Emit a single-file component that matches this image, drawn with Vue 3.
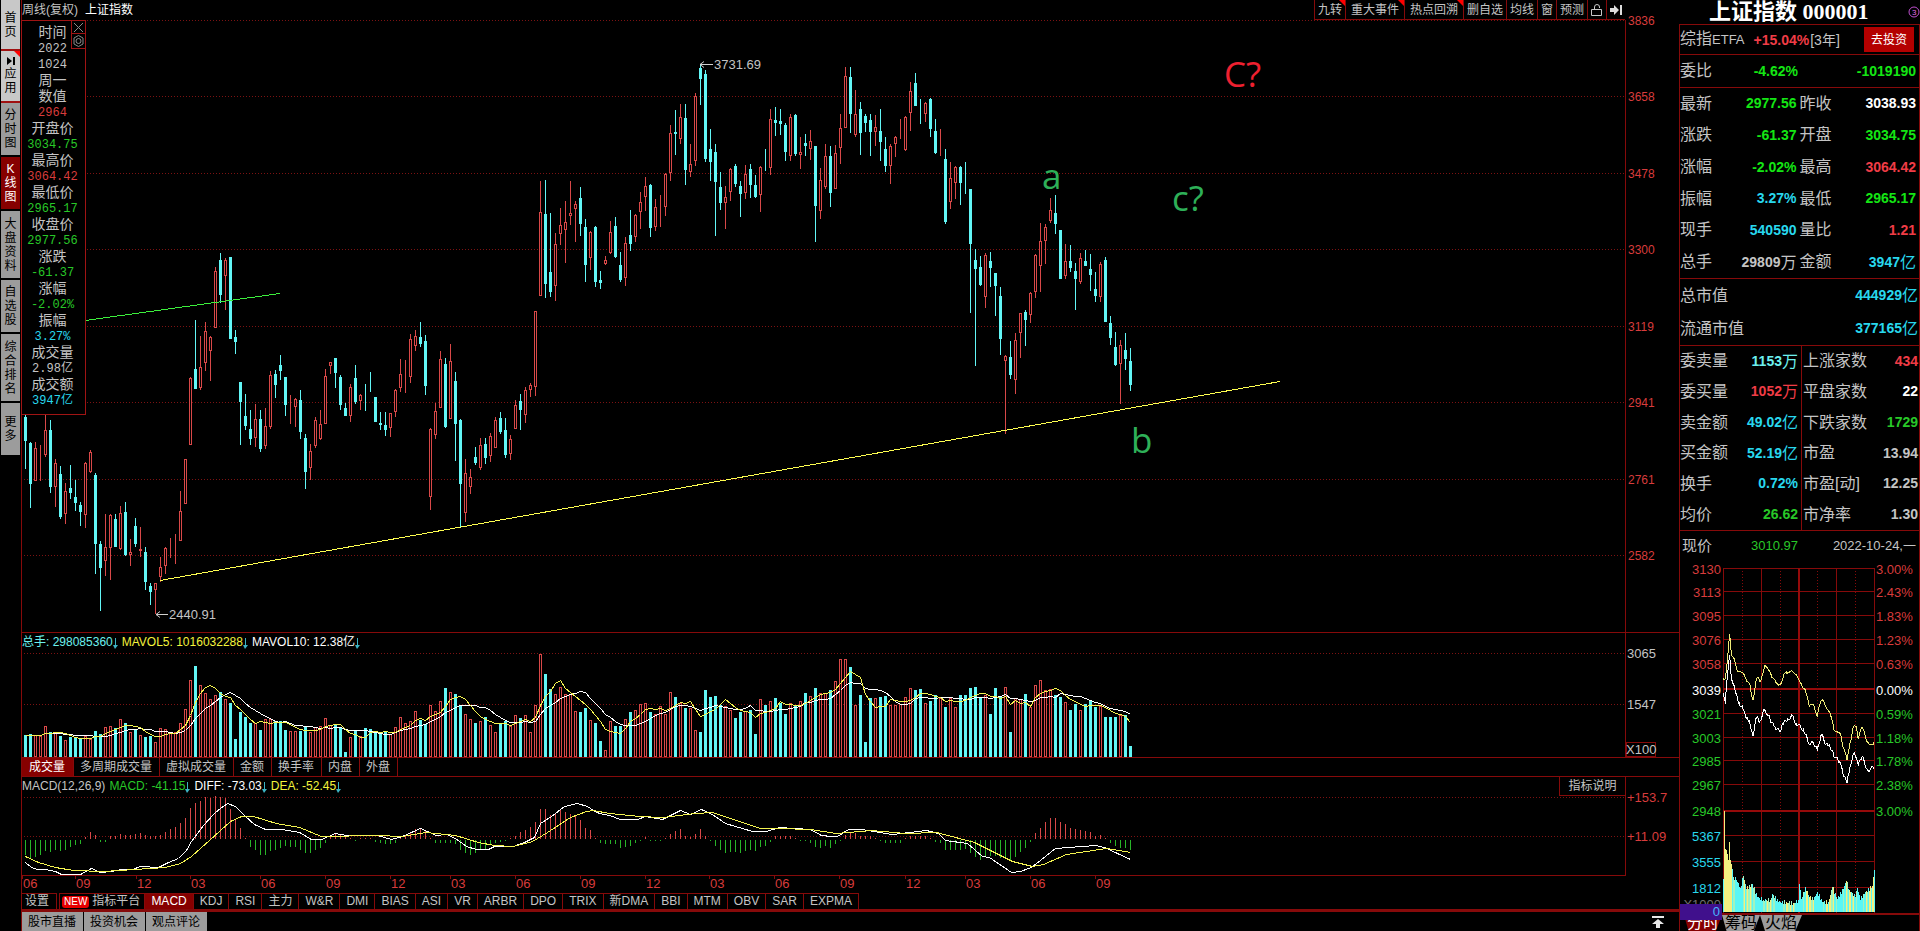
<script setup>
const sideTabs = [
  { text: '首页', h: 51, tone: 'light' },
  { text: '应用', h: 52, tone: 'light', play: true, flag: true },
  { text: '分时图', h: 54 },
  { text: 'K线图', h: 54, tone: 'on' },
  { text: '大盘资料', h: 69 },
  { text: '自选股', h: 54 },
  { text: '综合排名', h: 69 },
  { text: '更多', h: 54 },
]
const tools = [
  { text: '九转', flag: true },
  { text: '重大事件', flag: true, wide: true },
  { text: '热点回溯', flag: true, wide: true },
  { text: '删自选' },
  { text: '均线' },
  { text: '窗' },
  { text: '预测' },
]
const info = [
  ['时间'], ['2022', 'num'], ['1024', 'num'], ['周一'], ['数值'], ['2964', 'num r'],
  ['开盘价'], ['3034.75', 'num g'], ['最高价'], ['3064.42', 'num r'], ['最低价'], ['2965.17', 'num g'],
  ['收盘价'], ['2977.56', 'num g'], ['涨跌'], ['-61.37', 'num g'], ['涨幅'], ['-2.02%', 'num g'],
  ['振幅'], ['3.27%', 'num c'], ['成交量'], ['2.98亿', 'num'], ['成交额'], ['3947亿', 'num c'],
]

// One candle per entry: colour (r = up, c = down), high, body top, body bottom, low
const candleText = `
c414,417,441,469 c442,443,484,508 r442,448,481,481 r445,449,449,481 r415,430,455,457 c420,430,487,493
r459,463,487,507 c466,474,517,519 r483,491,514,524 c465,488,493,499 c480,497,503,511 c502,505,512,526
r462,463,515,528 r450,452,472,473 c473,475,544,574 c541,544,568,611 r514,547,561,576 r514,515,548,580
c514,519,547,547 r506,513,549,550 c502,512,555,556 r539,552,555,566 c518,526,544,547 r527,549,551,557
c547,552,582,590 c583,586,592,605 r583,583,590,614 r557,567,577,582 r547,548,566,574 r538,546,547,558
r534,539,540,564 r491,511,541,541 r459,459,504,504 r377,378,445,445 c320,369,389,389 r336,367,388,390
r322,331,363,371 r336,337,351,381 r267,271,328,328 c253,260,295,303 r258,260,276,310 c257,257,339,339
c330,337,342,354 c382,382,402,445 c394,416,426,430 c410,429,439,445 r404,419,438,447 c410,419,449,452
r408,426,446,449 r371,375,427,429 c370,374,385,398 c355,365,371,380 c377,377,405,416 r395,408,408,424
r398,399,407,427 c390,400,432,439 c434,438,472,489 r444,451,468,480 r417,420,446,448 r410,424,439,440
r369,376,424,424 r362,362,366,374 c358,358,373,388 c375,377,405,410 c403,408,416,416 r384,387,416,422
c365,378,402,404 r394,395,401,410 c384,393,394,411 c372,391,392,392 c397,397,422,422 c412,423,425,430
c412,425,430,436 r413,413,428,437 r389,390,412,417 r359,374,388,392 r360,374,375,393 r334,339,377,383
r330,336,346,351 c322,337,344,347 c335,341,386,395 r428,429,497,510 r403,411,435,439 r351,359,408,408
c358,364,427,428 r344,361,419,419 c372,381,424,461 c419,420,484,527 r459,473,513,522 r469,477,487,494
c447,457,463,465 r438,445,468,470 c438,444,458,464 r433,436,456,462 r417,420,448,448 c412,418,432,434
c418,430,455,458 r435,439,454,460 r400,405,429,429 c394,401,410,430 r387,390,415,423 r383,385,390,397
r311,311,387,396 r181,212,296,296 c180,214,284,298 c213,272,292,297 r233,244,286,301 r208,225,234,245
r201,222,230,263 r181,213,216,225 r201,204,209,242 c187,198,224,236 c219,227,265,282 r231,232,258,270
c226,227,282,287 c271,280,283,289 r256,260,264,265 r221,232,253,254 c217,226,257,258 c252,265,280,282
r237,243,278,286 c210,235,244,251 r214,215,237,242 r192,202,212,229 r177,186,197,211 c184,185,228,237
r199,207,227,231 r195,207,208,227 r173,174,207,216 r125,133,173,181 c110,132,134,155 r104,117,139,144
c104,118,170,185 r144,164,172,177 r93,96,161,166 c65,68,79,105 c70,74,159,162 c129,149,162,181
c144,152,182,236 c172,187,203,210 r186,197,203,229 r168,169,192,201 c164,166,184,187 c181,186,194,217
r165,174,193,199 c164,169,185,198 c175,185,197,198 r166,167,195,212 c149,167,168,171 r109,119,168,175
c107,120,123,136 c109,121,124,135 c123,125,152,161 r114,117,156,161 c114,115,154,156 r137,152,155,169
c134,143,146,156 r130,141,149,160 c146,146,206,242 r168,180,211,219 r144,156,187,189 c146,156,193,207
r145,153,189,189 r114,128,148,164 r67,76,128,128 c67,77,114,133 r90,114,135,137 c102,109,133,155
c114,116,123,132 c114,120,132,156 r115,127,132,146 c109,131,142,161 c137,149,166,172 r144,146,166,184
r136,137,144,157 r119,135,136,139 r116,117,150,151 r82,91,113,131 c73,83,106,106 c99,111,112,124
r102,103,114,122 c98,99,129,137 c119,131,153,154 r129,153,154,156 c149,159,222,224 r162,178,202,209
r166,167,183,199 c166,167,183,205 c162,184,185,194 c189,189,244,313 c249,260,269,366 c256,267,285,286
r253,255,297,308 c252,261,268,287 c273,273,286,316 c287,296,339,355 r355,356,361,434 c341,357,375,379
r333,340,380,394 r313,313,333,358 c310,312,320,346 r292,293,315,323 r254,255,292,298 r223,241,266,292
r224,227,241,264 r198,210,221,223 c195,213,224,234 c230,230,279,279 r244,261,276,279 c245,261,268,272
c263,271,279,310 r253,258,282,284 c250,261,266,266 c254,269,275,291 c272,289,296,302 r262,264,297,302
c257,260,322,322 c316,323,338,345 c332,347,365,366 r340,345,364,404 c333,350,359,370 c348,361,385,391`
const STEP = 5
const FIRST = 3.5
const cx = (i) => FIRST + STEP * i
const candles = candleText.trim().split(/\s+/).map((t, i) => {
  const [high, top, bottom, low] = t.slice(1).split(',').map(Number)
  return { up: t[0] === 'r', high, top, bottom, low, x: cx(i) }
})
const priceGrid = [[20, 3836], [96, 3658], [173, 3478], [249, 3300], [326, 3119], [402, 2941], [479, 2761], [555, 2582]]

const volumes = [
  25, 26, 25, 24, 36, 29, 28, 24, 20, 23, 22, 21, 24, 21, 30, 26, 34, 36, 33, 44, 39, 29, 32, 25, 23, 24, 17, 33, 32, 29,
  29, 39, 55, 88, 104, 82, 73, 67, 71, 74, 67, 62, 21, 51, 46, 39, 39, 31, 44, 44, 41, 41, 31, 30, 30, 30, 34, 29, 34, 36,
  45, 37, 38, 33, 6, 23, 30, 24, 33, 32, 29, 27, 29, 26, 34, 46, 39, 41, 53, 42, 38, 60, 53, 64, 79, 75, 72, 59, 49, 44,
  39, 41, 46, 37, 29, 39, 41, 36, 48, 45, 48, 29, 60, 118, 95, 78, 72, 80, 72, 72, 53, 52, 56, 42, 39, 18, 8, 41, 36, 36,
  44, 52, 54, 61, 62, 51, 49, 58, 49, 75, 69, 62, 56, 56, 31, 29, 77, 69, 70, 60, 58, 54, 45, 52, 53, 54, 26, 66, 59, 64,
  68, 62, 49, 62, 59, 64, 73, 70, 79, 73, 73, 77, 87, 112, 112, 103, 60, 71, 17, 68, 68, 69, 70, 59, 59, 61, 69, 79, 77, 78,
  62, 64, 71, 68, 57, 68, 57, 71, 71, 79, 80, 68, 71, 49, 79, 69, 80, 29, 68, 66, 72, 57, 83, 88, 77, 78, 71, 69, 63, 54,
  61, 54, 61, 65, 57, 58, 46, 46, 46, 48, 48, 13,
]
const VOL_BASE = 124
const volY = (v) => VOL_BASE - Math.round((v * 103) / 118)
const volBars = volumes.map((v, i) => ({ x: cx(i), y: volY(v), up: candles[i].up }))
const average = (n) =>
  volumes
    .map((_, i) => {
      const part = volumes.slice(Math.max(0, i - n + 1), i + 1)
      return `${cx(i)},${volY(part.reduce((a, b) => a + b, 0) / part.length) + 0.5}`
    })
    .join(' ')
const ma5 = average(5)
const ma10 = average(10)

const hist = [
  -17, -21, -20, -17, -13, -14, -11, -13, -11, -8, -6, -5, 2, 8, 5, -2, -2, 3, 3, 6, 5, 5, 6, 7, 5, 3, 3, 5, 8, 12,
  14, 18, 24, 36, 41, 44, 48, 47, 49, 48, 47, 34, 23, 13, 1, -8, -11, -17, -17, -13, -11, -9, -7, -8, -8, -11, -15, -15, -11, -9,
  -4, 5, 7, 5, 2, 1, -1, 1, 1, 1, -2, -4, -5, -5, -3, 1, 4, 8, 11, 13, 9, 1, -3, -3, -4, -3, -5, -12, -15, -17,
  -15, -11, -10, -6, -4, -2, -1, 1, 3, 8, 10, 14, 20, 34, 34, 28, 30, 34, 31, 29, 27, 22, 13, 10, 1, -4, -5, -5, -5, -9,
  -8, -7, -4, -1, 2, -1, -1, -1, 1, 6, 9, 11, 4, 2, 6, 11, 3, -1, -7, -12, -15, -14, -14, -15, -13, -12, -13, -8, -7, -2,
  3, 3, 3, 3, 1, -1, -1, -3, -8, -9, -7, -9, -5, -1, 5, 8, 7, 4, 3, 3, 1, -1, -4, -4, -4, -3, 1, 3, 4, 3,
  4, 1, -2, -4, -12, -12, -12, -11, -10, -15, -20, -23, -20, -18, -18, -21, -22, -24, -20, -14, -9, -2, 7, 13, 19, 24, 24, 19, 17, 13,
  12, 10, 9, 8, 4, 5, 1, -3, -7, -9, -9, -11,
]
const ZERO = 62
const macdLine = (points) =>
  points.trim().split(/\s+/).map((p) => {
    const [x, y] = p.split(',').map(Number)
    return `${x - 21.5},${Math.round(ZERO + (y - 870) * 0.87) + 0.5}`
  }).join(' ')
const diff = macdLine(`25,897 31,902 37,905 45,905 55,907 61,910 80,910 91,903 100,908 111,907 121,904 132,904 140,901 158,902 168,896 178,892
186,883 191,872 203,854 214,840 220,834 227,829 235,832 245,843 254,853 265,859 281,858 299,862 311,870 321,870 335,863 346,865 377,865
391,870 402,867 420,857 436,865 446,864 455,869 466,878 476,882 488,881 494,878 513,878 524,874 534,868 540,852 551,844 564,832 577,829
587,832 593,837 599,840 609,842 620,847 637,847 645,844 662,847 680,837 690,841 701,835 712,841 725,852 752,861 766,861 779,856
810,858 821,865 831,867 837,867 848,859 861,858 892,864 909,862 926,860 938,863 945,871 967,875 982,890 989,891 1011,908 1020,907
1031,902 1055,880 1095,877 1104,879 1130,893`)
const dea = macdLine(`25,889 38,897 55,902 73,906 103,907 134,904 165,902 180,898 191,890 209,871 230,849 241,843 253,844 276,852 299,856
321,866 377,865 402,867 425,862 455,865 478,873 494,877 513,878 532,872 547,862 570,845 586,838 593,837 609,840 639,844 662,845 695,840
712,839 733,847 760,857 779,857 810,858 836,863 871,860 905,863 936,862 974,873 1012,895 1032,901 1043,899 1066,887 1106,880 1130,885`)
const months = [
  [1, '06'], [54, '09'], [115, '12'], [169, '03'], [239, '06'], [304, '09'], [369, '12'], [429, '03'], [494, '06'],
  [559, '09'], [624, '12'], [688, '03'], [753, '06'], [818, '09'], [884, '12'], [944, '03'], [1009, '06'], [1074, '09'],
]
const volTabs = ['成交量', '多周期成交量', '虚拟成交量', '金额', '换手率', '内盘', '外盘']
const indTabs = ['MACD', 'KDJ', 'RSI', '主力', 'W&R', 'DMI', 'BIAS', 'ASI', 'VR', 'ARBR', 'DPO', 'TRIX', '新DMA', 'BBI', 'MTM', 'OBV', 'SAR', 'EXPMA']
const newsTabs = ['股市直播', '投资机会', '观点评论']

const quoteRows = [
  ['最新', '2977.56', '', 'G', '昨收', '3038.93', '', 'w'],
  ['涨跌', '-61.37', '', 'G', '开盘', '3034.75', '', 'G'],
  ['涨幅', '-2.02%', '', 'G', '最高', '3064.42', '', 'R'],
  ['振幅', '3.27%', '', 'c', '最低', '2965.17', '', 'G'],
  ['现手', '540590', '', 'c', '量比', '1.21', '', 'R'],
  ['总手', '29809', '万', '', '金额', '3947', '亿', 'c'],
]
const statRows = [
  ['委卖量', '1153', '万', 't', '上涨家数', '434', '', 'R'],
  ['委买量', '1052', '万', 'R', '平盘家数', '22', '', 'w'],
  ['卖金额', '49.02', '亿', 'c', '下跌家数', '1729', '', 'g'],
  ['买金额', '52.19', '亿', 'c', '市盈', '13.94', '', ''],
  ['换手', '0.72%', '', 'c', '市盈[动]', '12.25', '', ''],
  ['均价', '26.62', '', 'g', '市净率', '1.30', '', ''],
]

const miniRows = [
  [8, '3130', '3.00%', 'r'], [31, '3113', '2.43%', 'r'], [55, '3095', '1.83%', 'r'], [79, '3076', '1.23%', 'r'],
  [103, '3058', '0.63%', 'r'], [129, '3039', '0.00%', 'w'], [153, '3021', '0.59%', 'g'], [177, '3003', '1.18%', 'g'],
  [200, '2985', '1.78%', 'g'], [224, '2967', '2.38%', 'g'], [250, '2948', '3.00%', 'g'],
  [275, '5367', '', 'c'], [301, '3555', '', 'c'], [327, '1812', '', 'c'],
]
// Intraday points are stored at a third of a pixel
const intraday = (text, seed) => {
  const pts = text.trim().split(/\s+/).map((p) => p.split(',').map(Number))
  const out = []
  for (let k = 0; k < pts.length - 1; k++) {
    const [x0, y0] = pts[k]
    const [x1, y1] = pts[k + 1]
    for (let x = x0; x < x1; x += 3) {
      const jitter = Math.sin(x * seed) * 6
      out.push([x, y0 + ((y1 - y0) * (x - x0)) / (x1 - x0) + (x === x0 ? 0 : jitter)])
    }
  }
  out.push(pts[pts.length - 1])
  return out.map(([x, y]) => `${(x / 3 - 20).toFixed(1)},${(y / 3 - 20).toFixed(1)}`).join(' ')
}
const avgLine = intraday(`189,415 197,410 202,365 209,283 213,330 218,350 226,370 232,395 250,400 260,425 270,435 279,480 287,425 293,412
300,425 313,378 325,390 335,412 345,420 360,433 370,408 380,400 395,392 410,405 423,430 433,445 448,500 462,498 472,528 484,482
495,495 508,515 522,570 542,580 550,625 561,660 568,622 573,600 580,560 590,565 595,597 606,562 614,580 623,606 642,607`, 2.1)
const nowLine = intraday(`189,460 196,492 200,430 209,345 212,395 218,430 228,460 238,490 248,505 258,535 268,540 279,588 287,535 293,530
298,548 313,508 325,525 333,548 345,562 360,575 367,550 380,545 395,525 408,550 430,568 448,614 460,608 472,628 484,582 498,612
508,612 522,650 540,665 548,700 561,730 568,690 580,640 590,655 595,675 606,650 623,690 642,683`, 1.7)
const volShape = [
  [0, 33], [1, 101], [2, 63], [4, 58], [5, 52], [6, 70], [7, 52], [9, 43], [10, 35], [13, 32], [17, 24], [20, 36], [23, 23], [29, 28],
  [34, 15], [40, 12], [47, 12], [49, 18], [55, 10], [70, 9], [75, 12], [76, 28], [78, 13], [82, 25], [85, 17], [90, 12], [94, 20],
  [99, 10], [105, 10], [109, 25], [114, 13], [120, 23], [123, 31], [126, 22], [132, 15], [134, 24], [137, 12], [140, 18], [149, 26], [151, 42],
]
const miniBars = []
for (let k = 0; k < volShape.length - 1; k++) {
  const [x0, h0] = volShape[k]
  const [x1, h1] = volShape[k + 1]
  for (let x = x0; x < x1; x++) {
    const h = h0 + ((h1 - h0) * (x - x0)) / (x1 - x0) + (x === x0 ? 0 : Math.sin(x * 2.7) * 2)
    const block = Math.sin(x * 0.31) + Math.sin(x * 1.9) * 0.9
    const tone = x > 1 && x < 7 ? 'y' : block > 0.9 ? 'y' : block > 0.1 ? 'm' : 'c'
    miniBars.push({ x: 43 + x, h: Math.round(h), tone })
  }
}
miniBars.push({ x: 194, h: 42, tone: 'c' })
</script>

<template>
  <div class="app">
    <nav class="side">
      <button v-for="t in sideTabs" :key="t.text" class="side-tab" :class="t.tone" :style="{ height: t.h + 'px' }">
        <svg v-if="t.play" class="play" width="8" height="8"><path d="M0 0L5 4L0 8ZM6 0H8V8H6Z" /></svg>
        <span v-for="ch in t.text" :key="ch">{{ ch }}</span>
        <i v-if="t.flag" class="flag"></i>
      </button>
    </nav>

    <main class="main">
      <header class="head">
        <span class="period">周线(复权)</span>
        <h1>上证指数</h1>
        <div class="tools">
          <button v-for="t in tools" :key="t.text" :class="{ wide: t.wide }">{{ t.text }}<i v-if="t.flag" class="flag"></i></button>
          <button aria-label="锁定"><svg width="12" height="14"><path d="M0.5 6.5H10.5V12.5H0.5ZM3.5 6V4Q3.5 1.5 6 1.5Q8.500 1.5 8.500 4V5" fill="none" stroke="#c8c8c8" /></svg></button>
          <button aria-label="展开"><svg width="12" height="12"><path d="M0 4H4V1L9 6L4 11V8H0ZM10 1H12V11H10Z" fill="#ddd" /></svg></button>
        </div>
      </header>

      <section class="price">
        <svg class="plot">
          <g transform="translate(0 -20)">
            <g class="grid">
              <line v-for="g in priceGrid" :key="g[0]" x1="2" x2="100%" :y1="g[0] + 0.5" :y2="g[0] + 0.5" />
            </g>
            <g shape-rendering="crispEdges">
              <g v-for="k in candles" :key="k.x" :class="k.up ? 'up' : 'down'">
                <line :x1="k.x" :x2="k.x" :y1="k.high" :y2="k.low" />
                <rect :x="k.x - 1" :y="k.top + 0.5" width="2" :height="Math.max(k.bottom - k.top - 1, 0)" />
              </g>
              <line class="trend-g" x1="63" y1="320.5" x2="258" y2="293.500" />
              <line class="trend-y" x1="138" y1="580.5" x2="1258" y2="381.500" />
            </g>
            <g class="mark">
              <path d="M678 64.500H691M682 61.500L678 64.500L682 67.500" />
              <text x="692" y="69">3731.69</text>
              <path d="M134 614.500H146M138 611.500L134 614.500L138 617.500" />
              <text x="147" y="619">2440.91</text>
            </g>
            <g class="note">
              <text x="1020" y="189">a</text>
              <text x="1109" y="453">b</text>
              <text x="1150" y="211">c?</text>
              <text class="note-red" x="1202" y="87">C?</text>
            </g>
          </g>
        </svg>
        <svg class="axis">
          <g transform="translate(0 -20)" class="scale">
            <text v-for="g in priceGrid" :key="g[0]" x="2" :y="g[0] + 5" class="r">{{ g[1] }}</text>
          </g>
        </svg>
        <aside class="info">
          <button class="info-btn" aria-label="关闭"><svg width="13" height="12"><path d="M2 2L11 11M11 2L2 11" /></svg></button>
          <button class="info-btn gear" aria-label="设置"><svg width="13" height="14"><path d="M6.500 1.500L11 4V10L6.500 12.500L2 10V4Z" /><circle cx="6.500" cy="7" r="2.500" /></svg></button>
          <p v-for="(row, i) in info" :key="i" :class="row[1]">{{ row[0] }}</p>
        </aside>
      </section>

      <section class="volume">
        <svg class="plot">
          <g class="grid">
            <line x1="2" x2="100%" y1="20.5" y2="20.5" />
            <line x1="2" x2="100%" y1="71.5" y2="71.5" />
          </g>
          <g shape-rendering="crispEdges">
            <rect v-for="b in volBars" :key="b.x" :class="b.up ? 'up' : 'down'" :x="b.x - 1" :y="b.y + 0.5" width="2" :height="VOL_BASE - b.y - 1" />
            <polyline class="line-w" :points="ma10" />
            <polyline class="line-y" :points="ma5" />
          </g>
        </svg>
        <svg class="axis">
          <text x="1" y="25" class="n">3065</text>
          <text x="1" y="76" class="n">1547</text>
          <rect class="unit" x="0.5" y="109.500" width="29" height="14" />
          <text x="0" y="121" class="n">X100</text>
        </svg>
        <p class="legend">
          <span class="t">总手: 298085360</span><svg class="dn"><path d="M2 0H3V7H5L2 11L0 7H2Z" /></svg>
          <span class="y">MAVOL5: 1016032288</span><svg class="dn"><path d="M2 0H3V7H5L2 11L0 7H2Z" /></svg>
          <span class="w">MAVOL10: 12.38亿</span><svg class="dn"><path d="M2 0H3V7H5L2 11L0 7H2Z" /></svg>
        </p>
      </section>

      <nav class="tabs vol-tabs">
        <button v-for="(t, i) in volTabs" :key="t" :class="{ on: i === 0 }">{{ t }}</button>
      </nav>

      <section class="macd">
        <svg class="plot">
          <g class="grid">
            <line x1="2" x2="100%" y1="20.5" y2="20.5" />
            <line x1="2" x2="100%" y1="59.5" y2="59.5" />
          </g>
          <g shape-rendering="crispEdges">
            <line v-for="(h, i) in hist" :key="i" :class="h > 0 ? 'up' : 'fall'" :x1="cx(i)" :x2="cx(i)" :y1="ZERO + (h > 0 ? 0 : 1)" :y2="ZERO + (h > 0 ? 0 : 1) - Math.round(h * 0.87)" />
            <polyline class="line-w" :points="diff" />
            <polyline class="line-y" :points="dea" />
            <line class="frame" x1="0" x2="100%" y1="98.500" y2="98.500" />
            <line v-for="m in months" :key="m[0]" class="frame" :x1="m[0] - 0.500" :x2="m[0] - 0.500" y1="98" y2="102" />
          </g>
          <text v-for="m in months" :key="m[0]" :x="m[0]" y="111" class="r">{{ m[1] }}</text>
        </svg>
        <svg class="axis short">
          <text x="1" y="25" class="r">+153.7</text>
          <text x="1" y="64" class="r">+11.09</text>
        </svg>
        <p class="legend">
          <span class="n">MACD(12,26,9)</span>
          <span class="gap g">MACD: -41.15</span><svg class="dn"><path d="M2 0H3V7H5L2 11L0 7H2Z" /></svg>
          <span class="w">DIFF: -73.03</span><svg class="dn"><path d="M2 0H3V7H5L2 11L0 7H2Z" /></svg>
          <span class="y">DEA: -52.45</span><svg class="dn"><path d="M2 0H3V7H5L2 11L0 7H2Z" /></svg>
        </p>
        <button class="explain">指标说明</button>
      </section>

      <nav class="tabs ind-tabs">
        <button class="set">设置</button>
        <button class="platform"><b>NEW</b>指标平台</button>
        <button v-for="(t, i) in indTabs" :key="t" :class="{ on: i === 0 }">{{ t }}</button>
      </nav>

      <footer class="foot">
        <button v-for="t in newsTabs" :key="t" class="news">{{ t }}</button>
        <button class="top" aria-label="回到顶部"><svg width="12" height="12"><path d="M0 0H12V2H0ZM6 3L12 8H8V12H4V8H0Z" fill="#e8e8e8" /></svg></button>
      </footer>
    </main>

    <aside class="quote">
      <h2>上证指数 000001 <svg class="badge" width="12" height="12"><circle cx="6" cy="6" r="5" /><text x="4" y="9">3</text></svg></h2>
      <div class="box">
        <div class="fund">
          <span>综指<em>ETFA</em></span>
          <b class="R">+15.04%</b><span class="yr">[3年]</span>
          <button>去投资</button>
        </div>
        <div class="ratio"><span>委比</span><b class="G">-4.62%</b><b class="G">-1019190</b></div>
        <table class="rows quotes">
          <tbody>
            <tr v-for="q in quoteRows" :key="q[0]">
              <th>{{ q[0] }}</th><td :class="q[3]"><b>{{ q[1] }}</b>{{ q[2] }}</td>
              <th>{{ q[4] }}</th><td :class="q[7]"><b>{{ q[5] }}</b>{{ q[6] }}</td>
            </tr>
          </tbody>
        </table>
        <table class="rows cap">
          <tbody>
            <tr><th>总市值</th><td class="c"><b>444929</b>亿</td></tr>
            <tr><th>流通市值</th><td class="c"><b>377165</b>亿</td></tr>
          </tbody>
        </table>
        <table class="rows stat">
          <tbody>
            <tr v-for="q in statRows" :key="q[0]">
              <th>{{ q[0] }}</th><td :class="q[3]"><b>{{ q[1] }}</b>{{ q[2] }}</td>
              <th>{{ q[4] }}</th><td :class="q[7]"><b>{{ q[5] }}</b>{{ q[6] }}</td>
            </tr>
          </tbody>
        </table>
        <div class="now"><span>现价</span><em class="g">3010.97</em><em>2022-10-24,一</em></div>
        <svg class="mini">
          <g shape-rendering="crispEdges" class="mini-grid">
            <line v-for="m in miniRows" :key="m[0]" x1="43" x2="195" :y1="m[0] + 0.5" :y2="m[0] + 0.5" />
            <path d="M43.500 8V353M81.500 8V353M156.500 8V353M194.500 8V353" />
            <path class="bold" d="M119 8V353M43 129H195M43 250.500H195" />
            <path class="dots" d="M62.500 8V353M100.500 8V353M137.500 8V353M175.500 8V353" />
          </g>
          <g shape-rendering="crispEdges">
            <rect v-for="b in miniBars" :key="b.x" :class="'bar-' + b.tone" :x="b.x" :y="352 - b.h" width="1" :height="b.h" />
            <polyline class="mini-y" :points="avgLine" />
            <polyline class="line-w" :points="nowLine" />
          </g>
          <g v-for="m in miniRows" :key="m[0]" :class="m[3]">
            <text x="41" :y="m[0] + 6" text-anchor="end">{{ m[1] }}</text>
            <text x="196" :y="m[0] + 6">{{ m[2] }}</text>
          </g>
          <text x="41" y="349" text-anchor="end" class="dim">X1000</text>
        </svg>
        <div class="mini-tabs">
          <button class="m-on">分时</button><button>筹码</button><button class="m-wide">火焰</button>
          <span class="zero">0</span>
        </div>
      </div>
    </aside>
  </div>
</template>

<style>
html, body { background: #000; }
</style>

<style scoped>
.app {
  --line: #860a0a;
  display: flex;
  min-height: 100vh;
  background: #000;
  color: #c4c4c4;
  font: 12px/16px "Liberation Sans", "Noto Sans CJK SC", sans-serif;
  overflow: hidden;
}
button { font: inherit; color: inherit; background: none; border: 0; padding: 0; margin: 0; cursor: pointer; white-space: nowrap; }
p, h1, h2 { margin: 0; font-weight: 400; }
em { font-style: normal; }
svg { display: block; }
svg text { font-size: 13px; fill: currentColor; }
.r { color: #d83c3c; }
.R { color: #f03c46; }
.g { color: #28c828; }
.G { color: #14e614; }
.c { color: #28d8ee; }
.t { color: #6cf0ee; }
.y { color: #f4f43c; }
.w { color: #fff; }
.n { color: #c4c4c4; }

.side { width: 21px; flex: none; display: flex; flex-direction: column; box-sizing: border-box; padding: 0 1px; }
.side-tab {
  position: relative; display: flex; flex-direction: column; align-items: center; justify-content: center;
  box-sizing: border-box; border-bottom: 2px solid #000; background: #9c9c9c; color: #000; font-size: 12px; line-height: 14px;
}
.side-tab.light { background: #c8c8c8; border-bottom-color: #a01010; }
.side-tab.on { background: #860000; color: #fff; }
.play { margin-bottom: 2px; }
.flag { position: absolute; top: 0; right: 0; border: 3px solid red; border-left-color: transparent; border-bottom-color: transparent; }

.main { flex: 1; min-width: 0; display: flex; flex-direction: column; border-left: 1px solid var(--line); }
.head { display: flex; height: 20px; line-height: 20px; }
.head h1 { font-size: 12px; color: #fff; margin-left: 7px; }
.tools { margin: 0 54px 0 auto; display: flex; height: 20px; box-sizing: border-box; border-bottom: 1px solid var(--line); }
.tools button { position: relative; display: flex; align-items: center; padding: 0 3px; border-left: 1px solid var(--line); line-height: 18px; }
.tools .wide { padding: 0 5px; }

.price, .volume, .macd { position: relative; display: flex; }
.price { height: 612px; border-bottom: 1px solid var(--line); }
.volume { height: 124px; border-bottom: 1px solid var(--line); }
.macd { height: 116px; }
.plot { flex: 1; min-width: 0; height: 100%; }
.axis { width: 53px; flex: none; height: 100%; border-left: 1px solid var(--line); overflow: visible; }
.axis.short { height: 99px; }
.scale text { font-size: 12px; }
.grid line { stroke: #7c1212; stroke-dasharray: 1 2; shape-rendering: crispEdges; }
.up { stroke: #d84848; fill: #000; }
.down { stroke: #62f6f6; fill: #62f6f6; }
.fall { stroke: #28b428; }
.frame { stroke: #860a0a; }
.trend-g { stroke: #3cf03c; }
.trend-y { stroke: #ffff50; }
.line-w { stroke: #fff; fill: none; }
.line-y { stroke: #f4f450; fill: none; }
.mark path { stroke: #d0d0d0; fill: none; }
.mark { color: #c4c4c4; }
.note text { font: 35px "Open Sans", sans-serif; fill: #2eb058; }
.note .note-red { fill: #ee2030; }
.unit { fill: none; stroke: #860a0a; }

.info {
  position: absolute; left: -1px; top: 0; width: 65px; height: 395px; box-sizing: border-box; padding-top: 4px;
  border: 1px solid #a01414; background: #000; text-align: center; font: 14px/16px "Liberation Mono", "Noto Sans CJK SC", monospace;
}
.info p { height: 16px; padding-right: 2px; }
.info p.num { font-size: 12px; }
.info-btn { position: absolute; right: 0; top: 0; width: 14px; height: 13px; box-sizing: border-box; border-left: 1px solid #a01414; border-bottom: 1px solid #a01414; }
.info-btn.gear { top: 13px; height: 15px; }
.info-btn path, .info-btn circle { stroke: #8a8a8a; fill: none; }

.legend { position: absolute; left: 0; top: 1px; display: flex; align-items: center; white-space: nowrap; line-height: 16px; }
.legend .dn { width: 5px; height: 11px; margin: 3px 4px 0 0; fill: #3cb4c4; }
.legend .gap { margin-left: 4px; }
.explain { position: absolute; right: 54px; top: 0; width: 66px; height: 19px; border: solid var(--line); border-width: 0 0 1px 1px; background: #000; box-sizing: border-box; }

.tabs { display: flex; border-bottom: 1px solid var(--line); }
.tabs button { padding: 0 7px 0 6px; border-right: 1px solid var(--line); }
.tabs .on { background: #860000; color: #fff; }
.vol-tabs { height: 18px; }
.vol-tabs .on { padding: 0 8px 0 7px; }
.ind-tabs { height: 16px; border: 0; border-bottom: 3px solid var(--line); }
.ind-tabs button { border-top: 1px solid var(--line); line-height: 15px; padding: 0 6px; }
.ind-tabs .set { padding: 0 7px 0 3px; margin-right: 2px; }
.ind-tabs .platform { display: flex; align-items: center; padding: 0 4px 0 2px; border-left: 1px solid var(--line); }
.platform b { font-size: 10px; line-height: 12px; font-weight: 400; color: #fff; background: #e60000; border-radius: 3px; padding: 0 2px; margin-right: 3px; }

.foot { flex: 1; display: flex; height: 19px; }
.news { background: #9c9c9c; color: #000; padding: 0 7px 0 6px; border-right: 1px solid #000; }
.top { margin: 0 15px 0 auto; display: flex; align-items: center; }

.quote { width: 241px; flex: none; display: flex; flex-direction: column; }
.quote h2 { position: relative; height: 24px; box-sizing: border-box; padding-left: 30px; font: 700 22px/24px "Liberation Serif", "Noto Sans CJK SC", serif; color: #fff; white-space: nowrap; overflow: hidden; }
.badge { position: absolute; right: 0; top: 6px; }
.badge circle { fill: none; stroke: #c050d0; }
.badge text { font: 8px "Liberation Sans", sans-serif; fill: #e070e8; }
.box { flex: 1; display: flex; flex-direction: column; border: 1px solid var(--line); border-bottom: 0; font-size: 16px; }
.box b { font-size: 14px; }
.fund { display: flex; align-items: center; height: 29px; border-bottom: 1px solid var(--line); }
.fund em { font-size: 13px; }
.fund b { margin-left: 9px; }
.fund .yr { font-size: 14px; margin-left: 1px; }
.fund button { margin: 0 5px 0 auto; width: 50px; height: 25px; background: #b40000; color: #fff; font-size: 12px; }
.ratio { display: grid; grid-template-columns: 48px 70px 1fr; align-items: center; height: 32px; border-bottom: 1px solid var(--line); text-align: right; padding-right: 3px; }
.ratio span { text-align: left; }
.rows { width: 100%; border-collapse: separate; border-spacing: 0; table-layout: fixed; border-bottom: 1px solid var(--line); }
.rows th, .rows td { box-sizing: border-box; white-space: nowrap; padding: 0; line-height: 20px; }
.rows th { font-weight: 400; text-align: left; width: 50px; }
.rows td { text-align: right; padding-right: 3px; }
.rows td b { vertical-align: 1px; }
.quotes { height: 191px; }
.cap { height: 67px; }
.cap th { width: 80px; }
.cap td, .stat td:last-child { padding-right: 1px; }
.stat { height: 185px; }
.stat th { width: 51px; }
.stat th:nth-child(3) { border-left: 1px solid var(--line); width: 67px; padding-left: 1px; }
.stat td:nth-child(2) { width: 70px; }
.now { display: grid; grid-template-columns: 48px 70px 1fr; align-items: center; height: 29px; text-align: right; font-size: 15px; padding-right: 3px; }
.now span { text-align: left; padding-left: 2px; }
.now em { font-size: 13px; }
.mini { width: 100%; height: 353px; border-bottom: 2px solid var(--line); }
.mini-grid { stroke: #860a0a; fill: none; }
.mini-grid .bold { stroke-width: 2; stroke: #960a0a; }
.mini-grid .dots { stroke-dasharray: 1 2; }
.mini-y { stroke: #f0ec78; fill: none; }
.bar-c { fill: #5af6f6; }
.bar-y { fill: #f4f080; }
.bar-m { fill: #a0f4c0; }
.dim { color: #707070; }
.mini-tabs { position: relative; display: flex; height: 16px; padding-left: 4px; }
.mini-tabs button { width: 38px; height: 16px; background: #9c9c9c; color: #000; clip-path: polygon(0 0, 100% 0, 84% 100%, 12% 100%); }
.mini-tabs .m-on { background: #860000; color: #fff; }
.mini-tabs .m-wide { width: 42px; }
.zero { position: absolute; left: 0; top: -11px; width: 42px; height: 16px; box-sizing: border-box; padding-right: 2px; background: #40108c; color: #46b4ff; text-align: right; font-size: 13px; }
</style>
